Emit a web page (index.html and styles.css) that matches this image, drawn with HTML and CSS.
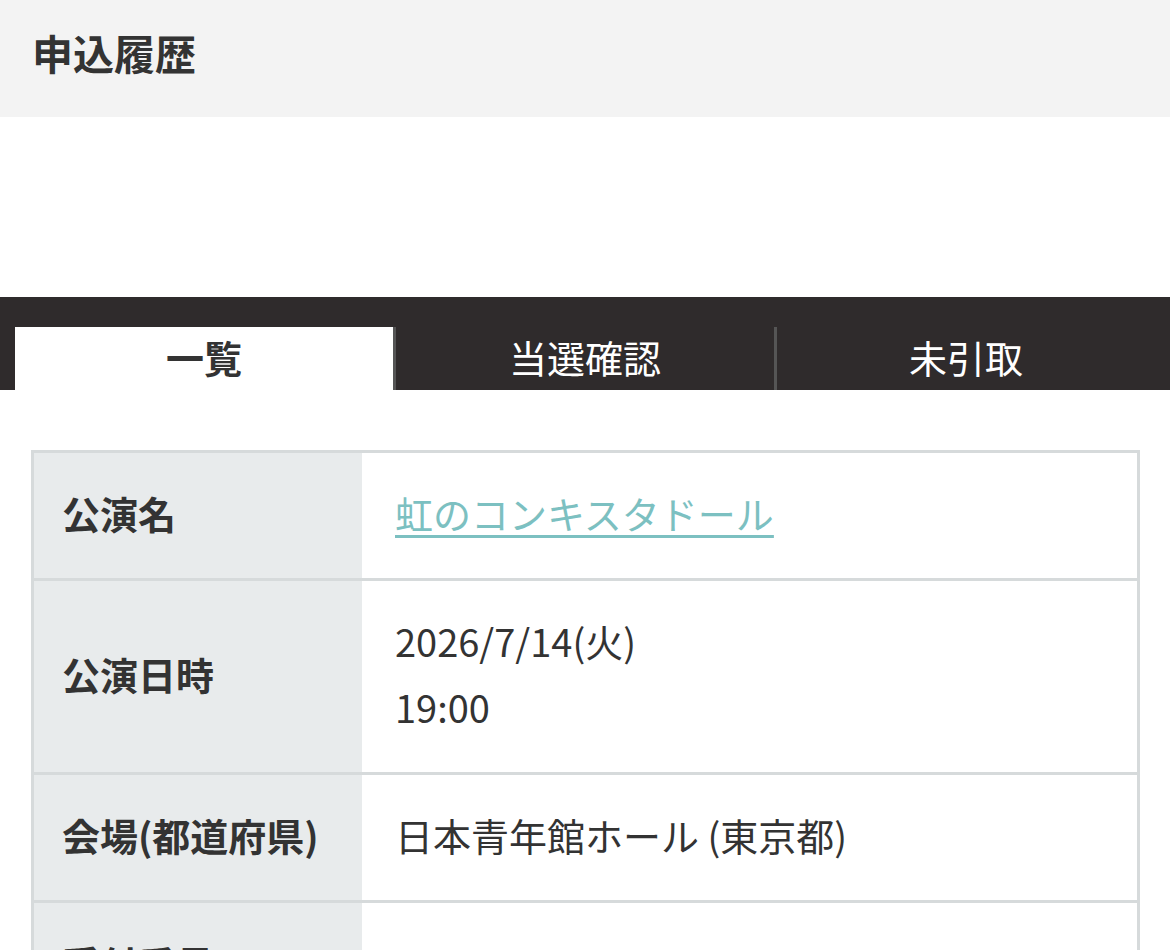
FILE: index.html
```html
<!DOCTYPE html>
<html lang="ja">
<head>
    <meta charset="UTF-8">
    <meta name="viewport" content="width=device-width, initial-scale=1.0">
    <title>申込履歴</title>
    <link rel="stylesheet" href="styles.css">
</head>
<body>

    <header class="page-header">
        <h1>申込履歴</h1>
    </header>

    <div class="spacer"></div>

    <!-- Tabs -->
    <nav class="tabs">
        <a class="tab active">一覧</a>
        <a class="tab">当選確認</a>
        <a class="tab">未引取</a>
    </nav>

    <div class="container">
        <table class="detail">
            <tr>
                <th>公演名</th>
                <td><a href="#" class="link">虹のコンキスタドール</a></td>
            </tr>
            <tr>
                <th>公演日時</th>
                <td>2026/7/14(火)<br>19:00</td>
            </tr>
            <tr>
                <th>会場(都道府県)</th>
                <td>日本青年館ホール (東京都)</td>
            </tr>
            <tr>
                <th>受付番号</th>
                <td>8-031-0021</td>
            </tr>
        </table>
    </div>

</body>
</html>
```

FILE: styles.css
```css
body {
    font-family: 'Noto Sans CJK JP', 'Noto Sans', sans-serif;
    margin: 0;
    background-color: white;
    color: #333;
}

/* Header */
.page-header {
    background-color: #f3f3f3;
    height: 117px;
    display: flex;
    align-items: center;
    padding-left: 32px;
}

.page-header h1 {
    margin: 0;
    font-size: 41px;
    font-weight: bold;
    color: #333;
    line-height: 1;
    padding-bottom: 12px;
}

.spacer {
    height: 180px;
}

/* Tabs */
.tabs {
    background-color: #2f2b2c;
    display: flex;
    padding: 30px 15px 0;
}

.tab {
    flex: 1;
    height: 63px;
    display: flex;
    align-items: center;
    justify-content: center;
    font-size: 38px;
    color: white;
    padding-bottom: 4px;
    box-sizing: border-box;
}

.tab + .tab {
    border-left: 3px solid #555;
}

.tab.active {
    background-color: white;
    color: #333;
    font-weight: bold;
}

/* Detail table */
.container {
    padding: 60px 30px 0 31px;
}

.detail {
    width: 100%;
    border-collapse: collapse;
    border: 3px solid #d6dadb;
}

.detail th,
.detail td {
    border-top: 3px solid #d6dadb;
    border-bottom: 3px solid #d6dadb;
    padding: 27px 32px 32px;
    font-size: 38px;
    line-height: 66px;
    text-align: left;
    vertical-align: middle;
}

.detail th {
    width: 268px;
    background-color: #e8ebec;
    font-weight: bold;
    color: #333;
    white-space: nowrap;
    padding-left: 28px;
}

.detail td {
    color: #333;
    padding-left: 33px;
}

.link {
    color: #7cc0c1;
    text-decoration: underline;
    text-underline-offset: 6px;
    text-decoration-thickness: 3px;
}
```
